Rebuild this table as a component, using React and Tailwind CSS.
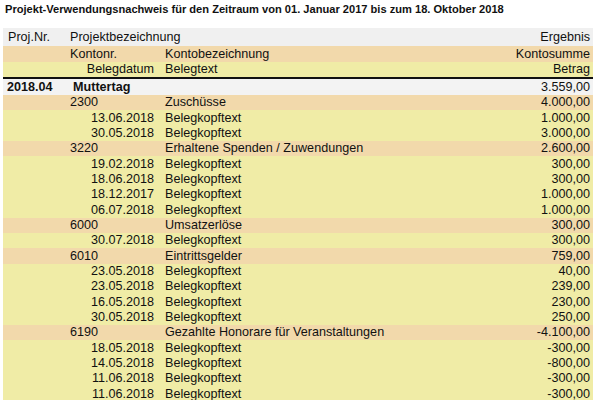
const rows = [
  { t: "k", nr: "2300", name: "Zuschüsse", sum: "4.000,00" },
  { t: "b", date: "13.06.2018", sum: "1.000,00" },
  { t: "b", date: "30.05.2018", sum: "3.000,00" },
  { t: "k", nr: "3220", name: "Erhaltene Spenden / Zuwendungen", sum: "2.600,00" },
  { t: "b", date: "19.02.2018", sum: "300,00" },
  { t: "b", date: "18.06.2018", sum: "300,00" },
  { t: "b", date: "18.12.2017", sum: "1.000,00" },
  { t: "b", date: "06.07.2018", sum: "1.000,00" },
  { t: "k", nr: "6000", name: "Umsatzerlöse", sum: "300,00" },
  { t: "b", date: "30.07.2018", sum: "300,00" },
  { t: "k", nr: "6010", name: "Eintrittsgelder", sum: "759,00" },
  { t: "b", date: "23.05.2018", sum: "40,00" },
  { t: "b", date: "23.05.2018", sum: "239,00" },
  { t: "b", date: "16.05.2018", sum: "230,00" },
  { t: "b", date: "30.05.2018", sum: "250,00" },
  { t: "k", nr: "6190", name: "Gezahlte Honorare für Veranstaltungen", sum: "-4.100,00" },
  { t: "b", date: "18.05.2018", sum: "-300,00" },
  { t: "b", date: "14.05.2018", sum: "-800,00" },
  { t: "b", date: "11.06.2018", sum: "-300,00" },
  { t: "b", date: "11.06.2018", sum: "-300,00" },
];

function Row({ row }) {
  if (row.t === "k") {
    return (
      <div className="flex items-center h-[15.33px] bg-[#f2d9ab]">
        <span className="w-[162px] pl-[67px]">{row.nr}</span>
        <span className="flex-1">{row.name}</span>
        <span className="pr-[3px]">{row.sum}</span>
      </div>
    );
  }
  return (
    <div className="flex items-center h-[15.33px] bg-[#f0eca6]">
      <span className="w-[151px] text-right">{row.date}</span>
      <span className="flex-1 pl-[11px]">Belegkopftext</span>
      <span className="pr-[3px]">{row.sum}</span>
    </div>
  );
}

export default function App() {
  return (
    <div className="h-[400px] overflow-hidden bg-white text-[12.6px] text-[#111] font-['Liberation_Sans',Arial,sans-serif] leading-none">
      <div className="h-[28px] pt-[4px] pl-[5px] font-bold text-[11.1px]">
        Projekt-Verwendungsnachweis für den Zeitraum von 01. Januar 2017 bis zum 18. Oktober 2018
      </div>
      <div className="ml-[3px] w-[590px]">
        <div className="flex items-center h-[18px] bg-[#f0f0f0]">
          <span className="w-[67px] pl-[5px]">Proj.Nr.</span>
          <span className="flex-1">Projektbezeichnung</span>
          <span className="pr-[3px]">Ergebnis</span>
        </div>
        <div className="flex items-center h-[16px] bg-[#f2d9ab]">
          <span className="w-[162px] pl-[67px]">Kontonr.</span>
          <span className="flex-1">Kontobezeichnung</span>
          <span className="pr-[3px]">Kontosumme</span>
        </div>
        <div className="flex items-center h-[17px] bg-[#f0eca6] border-b-2 border-[#111]">
          <span className="w-[151px] text-right">Belegdatum</span>
          <span className="flex-1 pl-[11px]">Belegtext</span>
          <span className="pr-[3px]">Betrag</span>
        </div>
        <div className="flex items-center h-[16px] bg-[#f3f3f3] font-bold">
          <span className="w-[70px] pl-[4px]">2018.04</span>
          <span className="flex-1">Muttertag</span>
          <span className="pr-[3px] font-normal">3.559,00</span>
        </div>
        {rows.map((row, i) => (
          <Row key={i} row={row} />
        ))}
      </div>
    </div>
  );
}
